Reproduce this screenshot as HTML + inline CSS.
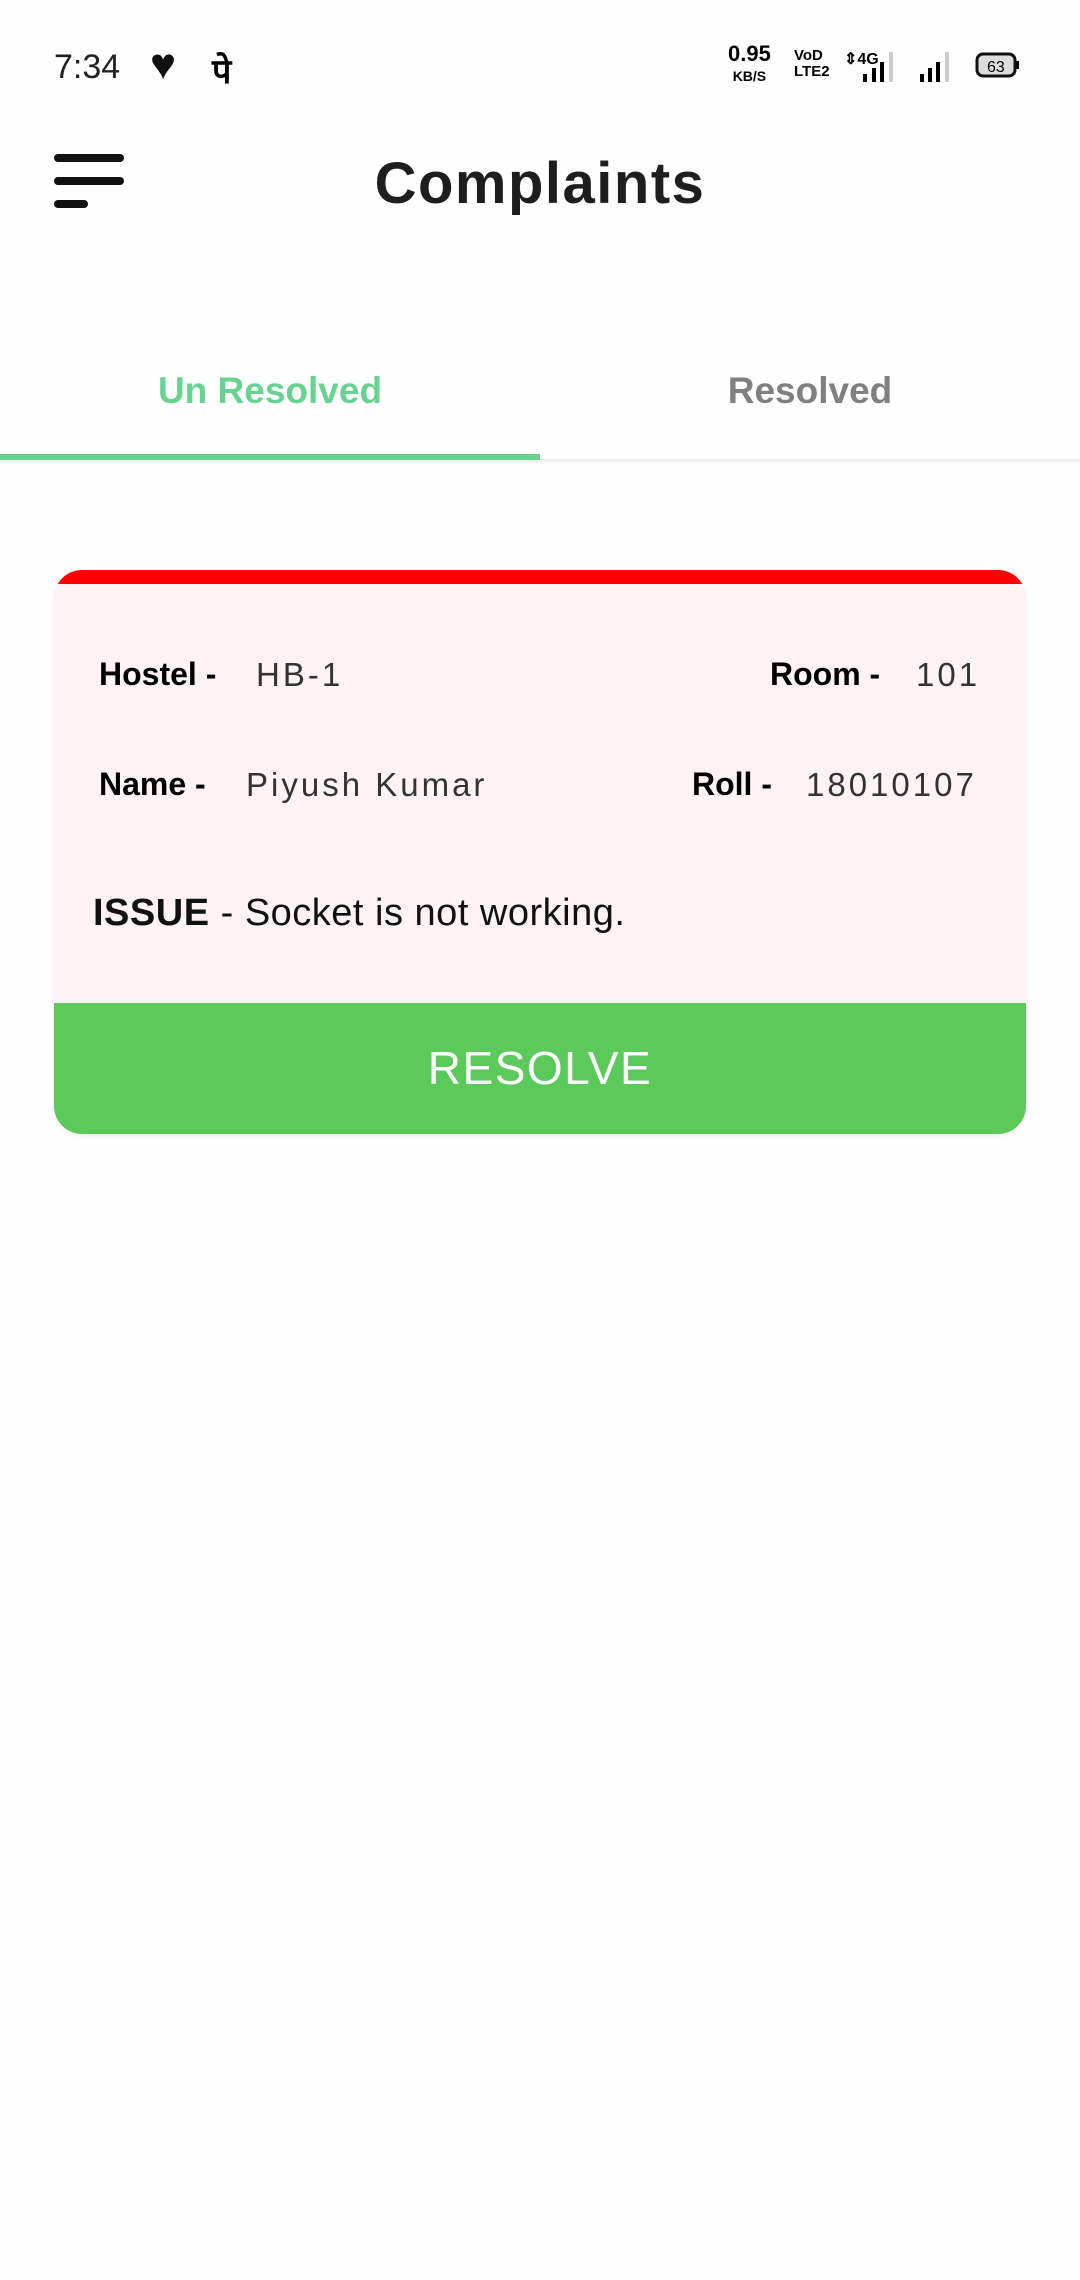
<!DOCTYPE html>
<html><head><meta charset="utf-8"><style>
body{margin:0;width:1080px;height:2280px;background:#fefefe;font-family:"Liberation Sans",sans-serif;position:relative;overflow:hidden}
.a{position:absolute}
.bar{background:#111;border-radius:4px;height:8px}
.v{font-size:33px;color:#333;letter-spacing:3px}
</style></head><body>
<div class="a" style="left:54px;top:48px;font-size:34px;color:#222">7:34</div>
<div class="a" style="left:150px;top:40px;font-size:44px;color:#111">♥</div>
<div class="a" style="left:212px;top:44px;font-size:34px;font-weight:bold;font-family:'Noto Sans CJK SC',sans-serif">पे</div>
<div class="a" style="left:728px;top:44px;font-size:22px;font-weight:bold;line-height:20px;text-align:center">0.95<br><span style="font-size:14px">KB/S</span></div>
<div class="a" style="left:794px;top:48px;font-size:15px;font-weight:bold;line-height:16px">VoD<br>LTE2</div>
<svg class="a" style="left:842px;top:48px" width="180" height="36">
<text x="2" y="16" font-size="16" font-weight="bold" font-family="Liberation Sans">⇕4G</text>
<rect x="21" y="26" width="4" height="8"/><rect x="30" y="20" width="4" height="14"/><rect x="38" y="14" width="4" height="20"/><rect x="47" y="4" width="4" height="30" fill="#ccc"/>
<rect x="78" y="26" width="4" height="8"/><rect x="86" y="20" width="4" height="14"/><rect x="94" y="14" width="4" height="20"/><rect x="103" y="4" width="4" height="30" fill="#ccc"/>
<rect x="135" y="6" width="38" height="22" rx="6" fill="#ddd" stroke="#111" stroke-width="3"/><rect x="174" y="13" width="3" height="8"/>
<text x="145" y="24" font-size="16" font-family="Liberation Sans">63</text></svg>
<div class="a bar" style="left:54px;top:154px;width:70px"></div>
<div class="a bar" style="left:54px;top:177px;width:70px"></div>
<div class="a bar" style="left:54px;top:200px;width:34px"></div>
<div class="a" style="left:0;width:1080px;top:150px;text-align:center;font-size:58px;font-weight:bold;color:#1e1e1e;letter-spacing:1.5px">Complaints</div>
<div class="a" style="left:0;width:540px;top:370px;text-align:center;font-size:37px;font-weight:bold;color:#68d391">Un Resolved</div>
<div class="a" style="left:540px;width:540px;top:370px;text-align:center;font-size:37px;font-weight:bold;color:#808080">Resolved</div>
<div class="a" style="left:0;top:459px;width:1080px;height:6px;background:linear-gradient(#e8e8e8,#fefefe)"></div>
<div class="a" style="left:0;top:454px;width:540px;height:6px;background:#68d391"></div>
<div class="a" style="left:54px;top:570px;width:972px;height:564px;border-radius:28px;overflow:hidden;background:#fff2f2;box-shadow:0 2px 4px rgba(0,0,0,.06)">
<div style="height:14px;background:#fe0000"></div>
<div class="a" style="left:45px;top:86px;font-size:32px;font-weight:bold">Hostel -</div>
<div class="a v" style="left:202px;top:86px">HB-1</div>
<div class="a" style="left:716px;top:86px;font-size:32px;font-weight:bold">Room -</div>
<div class="a v" style="left:862px;top:86px">101</div>
<div class="a" style="left:45px;top:196px;font-size:32px;font-weight:bold">Name -</div>
<div class="a v" style="left:192px;top:196px">Piyush Kumar</div>
<div class="a" style="left:638px;top:196px;font-size:32px;font-weight:bold">Roll -</div>
<div class="a v" style="left:752px;top:196px">18010107</div>
<div class="a" style="left:39px;top:322px;font-size:38px;color:#111;letter-spacing:.5px"><b>ISSUE</b> - Socket is not working.</div>
<div class="a" style="left:0;top:433px;width:972px;height:131px;background:#5bca5b;color:#fff;font-size:46px;text-align:center;line-height:131px;letter-spacing:1.5px">RESOLVE</div>
</div>
</body></html>
